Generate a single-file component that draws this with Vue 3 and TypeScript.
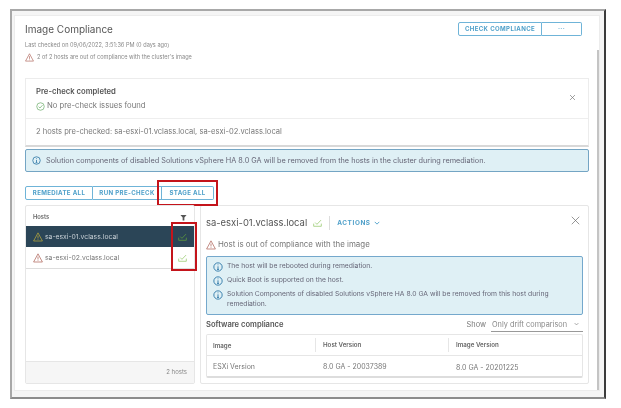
<script setup lang="ts">
const actions = ['REMEDIATE ALL', 'RUN PRE-CHECK', 'STAGE ALL']
const hosts = [
  { name: 'sa-esxi-01.vclass.local', selected: true },
  { name: 'sa-esxi-02.vclass.local', selected: false },
]
const notes = [
  'The host will be rebooted during remediation.',
  'Quick Boot is supported on the host.',
  'Solution Components of disabled Solutions vSphere HA 8.0 GA will be removed from this host during remediation.',
]
</script>

<template>
  <div class="page">
    <div class="window">
      <div class="card">
        <div class="scrollbar"></div>
        <header class="head">
          <div>
            <h1>Image Compliance</h1>
            <p class="checked">Last checked on 09/06/2022, 3:51:36 PM (0 days ago)</p>
            <p class="outline">
              <svg class="tri small" viewBox="0 0 12 12"><path d="M6 1 11.3 10.8H.7Z" /><path d="M6 4.2v3.6M6 8.8v.8" /></svg>
              2 of 2 hosts are out of compliance with the cluster's image
            </p>
          </div>
          <div class="btn-group top-btns">
            <button>CHECK COMPLIANCE</button>
            <button class="more">···</button>
          </div>
        </header>

        <section class="precheck">
          <div class="pc-top">
            <div>
              <strong>Pre-check completed</strong>
              <p>
                <svg class="ok" viewBox="0 0 12 12"><circle cx="6" cy="6" r="5" /><path d="M3.4 6.2 5.3 8l3.4-3.8" /></svg>
                No pre-check issues found
              </p>
            </div>
            <svg class="x" viewBox="0 0 10 10"><path d="M1.5 1.5 8.5 8.5M8.5 1.5 1.5 8.5" /></svg>
          </div>
          <div class="pc-bottom">2 hosts pre-checked: sa-esxi-01.vclass.local, sa-esxi-02.vclass.local</div>
        </section>

        <div class="alert">
          <svg class="info" viewBox="0 0 12 12"><circle cx="6" cy="6" r="5" /><path d="M6 5.2v3.6M4.8 8.9h2.4M6 3v.9" /></svg>
          Solution components of disabled Solutions vSphere HA 8.0 GA will be removed from the hosts in the cluster during remediation.
        </div>

        <div class="btn-group act-btns">
          <button v-for="a in actions" :key="a">{{ a }}</button>
          <div class="mark mark-stage"></div>
        </div>

        <div class="split">
          <aside class="hosts">
            <div class="hosts-head">
              <span>Hosts</span>
              <svg class="filter" viewBox="0 0 8 8"><path d="M.5 1h7L5 4v3.5H3V4Z" /></svg>
            </div>
            <div v-for="h in hosts" :key="h.name" class="host" :class="{ selected: h.selected }">
              <svg class="tri" viewBox="0 0 12 12"><path d="M6 1 11.3 10.8H.7Z" /><path d="M6 4.2v3.6M6 8.8v.8" /></svg>
              <span class="host-name">{{ h.name }}</span>
              <svg class="stage" viewBox="0 0 10 9"><path d="M.7 5.2v3h8.6v-3" /><path d="M2.4 4 4.4 6 9 1.2" /></svg>
            </div>
            <div class="spacer"></div>
            <div class="hosts-foot">2 hosts</div>
            <div class="mark mark-hosts"></div>
          </aside>

          <section class="detail">
            <div class="d-title">
              <h2>sa-esxi-01.vclass.local</h2>
              <svg class="stage" viewBox="0 0 10 9"><path d="M.7 5.2v3h8.6v-3" /><path d="M2.4 4 4.4 6 9 1.2" /></svg>
              <span class="rule"></span>
              <span class="actions">ACTIONS</span>
              <svg class="chev" viewBox="0 0 8 5"><path d="M1 1 4 4 7 1" /></svg>
              <svg class="close" viewBox="0 0 12 12"><path d="M1 1 11 11M11 1 1 11" /></svg>
            </div>
            <p class="status">
              <svg class="tri" viewBox="0 0 12 12"><path d="M6 1 11.3 10.8H.7Z" /><path d="M6 4.2v3.6M6 8.8v.8" /></svg>
              Host is out of compliance with the image
            </p>
            <div class="notes">
              <div v-for="n in notes" :key="n" class="note">
                <svg class="info" viewBox="0 0 12 12"><circle cx="6" cy="6" r="5" /><path d="M6 5.2v3.6M4.8 8.9h2.4M6 3v.9" /></svg>
                <span>{{ n }}</span>
              </div>
            </div>
            <div class="sw-row">
              <strong>Software compliance</strong>
              <span class="show">Show</span>
              <span class="select">
                Only drift comparison
                <svg viewBox="0 0 8 5"><path d="M1 1 4 4 7 1" /></svg>
              </span>
            </div>
            <div class="table">
              <div class="tr th">
                <span>Image</span><span>Host Version</span><span>Image Version</span>
              </div>
              <div class="tr td">
                <span>ESXi Version</span><span>8.0 GA - 20037389</span><span class="low">8.0 GA - 20201225</span>
              </div>
            </div>
          </section>
        </div>
      </div>
    </div>
  </div>
</template>

<style>
html, body { margin: 0; background: #fff; }
</style>

<style scoped>
.page {
  width: 621px;
  height: 408px;
  padding: 9px 0 0 10px;
  box-sizing: border-box;
  font-family: Inter, "Noto Sans", sans-serif;
  color: #666;
  overflow: hidden;
  filter: blur(0.35px);
}
.window {
  width: 596px;
  height: 390px;
  box-sizing: border-box;
  border: 2px solid #a8a8a8;
  border-right-color: #3c3c3c;
  border-bottom-color: #8c8c8c;
  background: #f5f5f5;
  padding: 4px 4px 6px 2px;
}
.card {
  position: relative;
  height: 100%;
  box-sizing: border-box;
  background: #fff;
  padding: 5px 10px 0 10px;
  border: 1px solid #ececec;
}
.scrollbar {
  position: absolute;
  right: 0;
  top: 34px;
  bottom: 0;
  width: 2px;
  background: #c4c4c4;
}
p, h1, h2 { margin: 0; font-weight: 400; }
svg { fill: none; flex: none; }
.head { display: flex; justify-content: space-between; height: 57px; }
h1 { font-size: 10px; line-height: 15px; color: #555; padding-top: 1px; }
.checked { font-size: 5.6px; line-height: 7px; margin-top: 5px; color: #888; }
.outline { display: flex; align-items: center; gap: 3px; font-size: 5.6px; margin-top: 4px; line-height: 9px; color: #888; }
.tri { width: 10px; height: 10px; }
.tri.small { width: 9px; height: 9px; }
.tri path { stroke: #b0675c; stroke-width: 0.9; }
.btn-group { display: flex; color: #4d9fc9; }
.btn-group button {
  all: unset;
  box-sizing: border-box;
  height: 14px;
  font-size: 6.1px;
  font-weight: 700;
  letter-spacing: 0.35px;
  text-align: center;
  line-height: 12px;
  border: 1px solid #6fb4d8;
  border-left-width: 0;
  color: #4d9fc9;
}
.btn-group button:first-child { border-left-width: 1px; border-radius: 2px 0 0 2px; }
.btn-group button:nth-last-child(1), .act-btns button:nth-child(3) { border-radius: 0 2px 2px 0; }
.top-btns { margin: 1px 7px 0 0; align-self: flex-start; }
.top-btns button:first-child { width: 84px; }
.top-btns .more { width: 40px; }
.precheck {
  height: 69px;
  box-sizing: border-box;
  border: 1px solid #ececec;
  border-bottom: 2px solid #d8d8d8;
  font-size: 7.55px;
  color: #777;
}
.pc-top {
  height: 40px;
  box-sizing: border-box;
  border-bottom: 1px solid #eee;
  padding: 7px 12px 0 10px;
  display: flex;
  justify-content: space-between;
}
.pc-top strong { font-size: 7.7px; line-height: 11px; color: #555; font-weight: 600; display: block; }
.pc-top p { display: flex; align-items: center; gap: 2px; line-height: 11px; margin-top: 3px; font-size: 7.7px; }
.ok { width: 9px; height: 9px; margin-top: 1px; }
.ok circle, .ok path { stroke: #62a860; stroke-width: 0.9; }
.x { width: 7px; height: 7px; margin-top: 8px; }
.x path { stroke: #777; stroke-width: 1; }
.pc-bottom { height: 27px; line-height: 25px; padding-left: 10px; }
.alert {
  height: 23px;
  box-sizing: border-box;
  margin-top: 2px;
  background: #dff0f5;
  border: 1px solid #74a5c4;
  border-radius: 2px;
  display: flex;
  align-items: center;
  gap: 5px;
  padding-left: 6px;
  font-size: 7.3px;
  color: #667;
}
.info { width: 9px; height: 9px; }
.info circle, .info path { stroke: #2f78a8; stroke-width: 1.1; }
.act-btns { position: relative; margin-top: 14px; height: 14px; }
.act-btns button:nth-child(1) { width: 68px; }
.act-btns button:nth-child(2) { width: 69px; }
.act-btns button:nth-child(3) { width: 52px; }
.mark { position: absolute; border: 2px solid #c4141b; box-sizing: border-box; }
.mark-stage { left: 132px; top: -6px; width: 61px; height: 26px; }
.split { display: flex; gap: 5px; margin-top: 5px; height: 179px; }
.hosts {
  position: relative;
  width: 170px;
  box-sizing: border-box;
  border: 1px solid #e6e6e6;
  border-radius: 2px;
  display: flex;
  flex-direction: column;
}
.hosts-head {
  height: 20px;
  flex: none;
  display: flex;
  justify-content: space-between;
  align-items: center;
  padding: 0 7px;
  font-size: 5.8px;
  font-weight: 600;
  color: #666;
}
.filter { width: 7px; height: 7px; margin-top: 2px; }
.filter path { fill: #555; }
.host {
  height: 22px;
  flex: none;
  box-sizing: border-box;
  display: flex;
  align-items: center;
  padding: 0 7px;
  gap: 2px;
  font-size: 6.8px;
  border-bottom: 1px solid #ddd;
  color: #777;
}
.host.selected { height: 21px; background: #2b4557; color: #c8d0d6; border-bottom: 0; }
.host.selected .tri path { stroke: #b9a93d; }
.host-name { flex: 1; }
.stage { width: 9px; height: 8px; }
.stage path { stroke: #9ccb74; stroke-width: 0.9; }
.host.selected .stage path { stroke: #5d9a3c; }
.spacer { flex: 1; }
.hosts-foot {
  height: 21px;
  flex: none;
  border-top: 1px solid #e6e6e6;
  background: #f6f6f6;
  text-align: right;
  line-height: 20px;
  padding-right: 7px;
  font-size: 6px;
  color: #888;
}
.mark-hosts { left: 145px; top: 16px; width: 26px; height: 49px; }
.detail {
  flex: 1;
  min-width: 0;
  box-sizing: border-box;
  border: 1px solid #e6e6e6;
  border-radius: 2px;
  padding: 0 5px 0 5px;
}
.d-title { display: flex; align-items: center; height: 29px; position: relative; padding-top: 4px; box-sizing: border-box; }
h2 { font-size: 9.45px; color: #555; }
.d-title .stage { margin-left: 6px; }
.rule { width: 1px; height: 14px; background: #ddd; margin: 0 7px; }
.actions { font-size: 6.4px; font-weight: 700; letter-spacing: 0.6px; color: #4d9fc9; }
.chev { width: 6px; height: 4px; margin-left: 3px; }
.chev path { stroke: #4d9fc9; stroke-width: 1.2; }
.close { width: 9px; height: 9px; position: absolute; right: 3px; top: 10px; }
.close path { stroke: #666; stroke-width: 0.9; }
.status { display: flex; align-items: center; gap: 2px; font-size: 7.9px; line-height: 11px; margin-top: 4px; color: #777; }
.notes {
  height: 59px;
  box-sizing: border-box;
  margin-top: 6px;
  background: #dff0f5;
  border: 1px solid #74a8cc;
  border-radius: 2px;
  padding: 4px 12px 0 6px;
}
.note { display: flex; gap: 4px; font-size: 6.78px; line-height: 10px; margin-bottom: 3px; color: #667; }
.note .info { width: 10px; height: 10px; margin-top: 1px; }
.sw-row { display: flex; align-items: center; height: 19px; font-size: 7.6px; }
.sw-row strong { font-weight: 600; color: #555; flex: 1; }
.show { font-size: 7.4px; color: #777; margin-right: 5px; }
.select {
  width: 92px;
  height: 15px;
  box-sizing: border-box;
  border-bottom: 1px solid #999;
  display: flex;
  justify-content: space-between;
  align-items: center;
  padding: 0 4px 0 1px;
  font-size: 7.35px;
  color: #888;
}
.select svg { width: 5px; height: 4px; }
.select path { stroke: #777; stroke-width: 1; }
.table { border: 1px solid #e6e6e6; border-bottom: 2px solid #ddd; border-radius: 2px; }
.tr { display: grid; grid-template-columns: 108px 133px 1fr; align-items: center; }
.tr span { padding-left: 6px; }
.th { height: 20px; border-bottom: 1px solid #e6e6e6; font-size: 6.2px; font-weight: 600; color: #666; }
.th span + span { border-left: 1px solid #e6e6e6; line-height: 14px; padding-left: 7px; }
.td { height: 20px; font-size: 7px; color: #777; }
.td span + span { padding-left: 8px; }
.low { padding-top: 2px; }
</style>
